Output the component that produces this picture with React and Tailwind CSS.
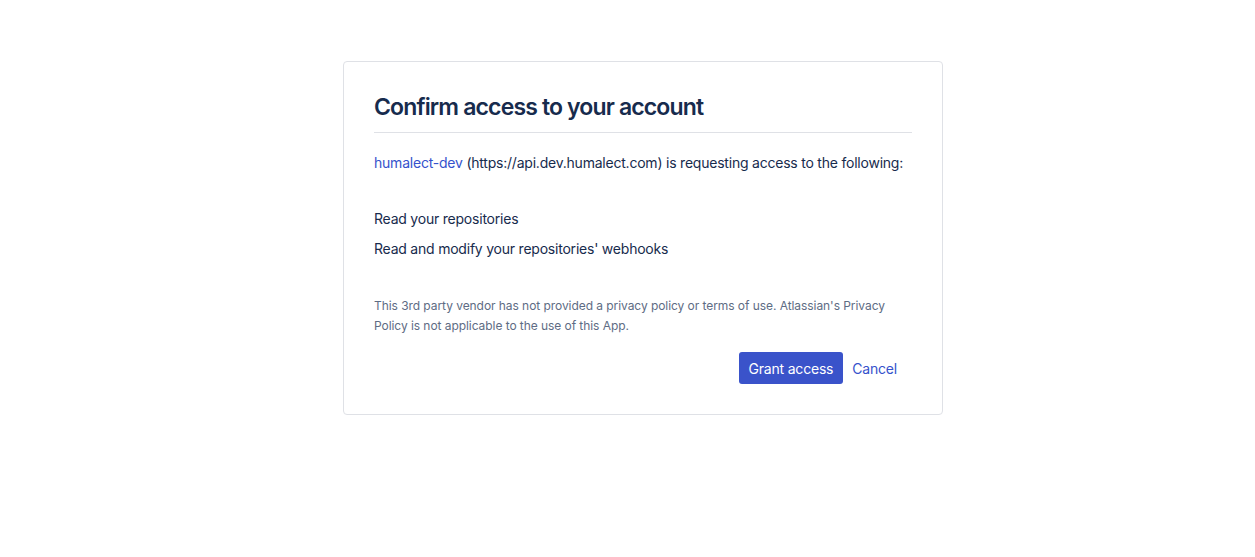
import React from "react";

export default function App() {
  return (
    <div className="min-h-[557px] bg-white pt-[61px] pl-[343px]" style={{ fontFamily: "Inter, 'Noto Sans', sans-serif" }}>
      <div className="w-[600px] rounded-[4px] border border-[#dfe1e6] bg-white px-[30px] pt-[30px] pb-[30px] text-[#172b4d]">
        <h1 className="pt-[1px] text-[23px] leading-[28px] font-semibold tracking-[-0.85px] text-[#172b4d]">Confirm access to your account</h1>
        <div className="mt-[11px] h-px bg-[#dfe1e6]" />
        <p className="mt-[20px] text-[14px] leading-[20px] tracking-[-0.22px] whitespace-nowrap">
          <a className="text-[#3552cc]">humalect-dev</a> (https://api.dev.humalect.com) is requesting access to the following:
        </p>
        <ul className="mt-[36px] flex flex-col gap-[10px] text-[14px] leading-[20px] tracking-[-0.22px]">
          <li>Read your repositories</li>
          <li>Read and modify your repositories' webhooks</li>
        </ul>
        <p className="mt-[37px] text-[12px] leading-[20px] tracking-[-0.06px] text-[#5e6c84]">
          This 3rd party vendor has not provided a privacy policy or terms of use. Atlassian's Privacy Policy is not applicable to the use of this App.
        </p>
        <div className="mt-[16px] flex items-center justify-end gap-[9px] pr-[15px]">
          <button className="h-[32px] rounded-[3px] bg-[#3a53ca] px-[10px] text-[14px] tracking-[-0.2px] text-white">Grant access</button>
          <button className="text-[14px] tracking-[-0.2px] text-[#3552cc]">Cancel</button>
        </div>
      </div>
    </div>
  );
}
